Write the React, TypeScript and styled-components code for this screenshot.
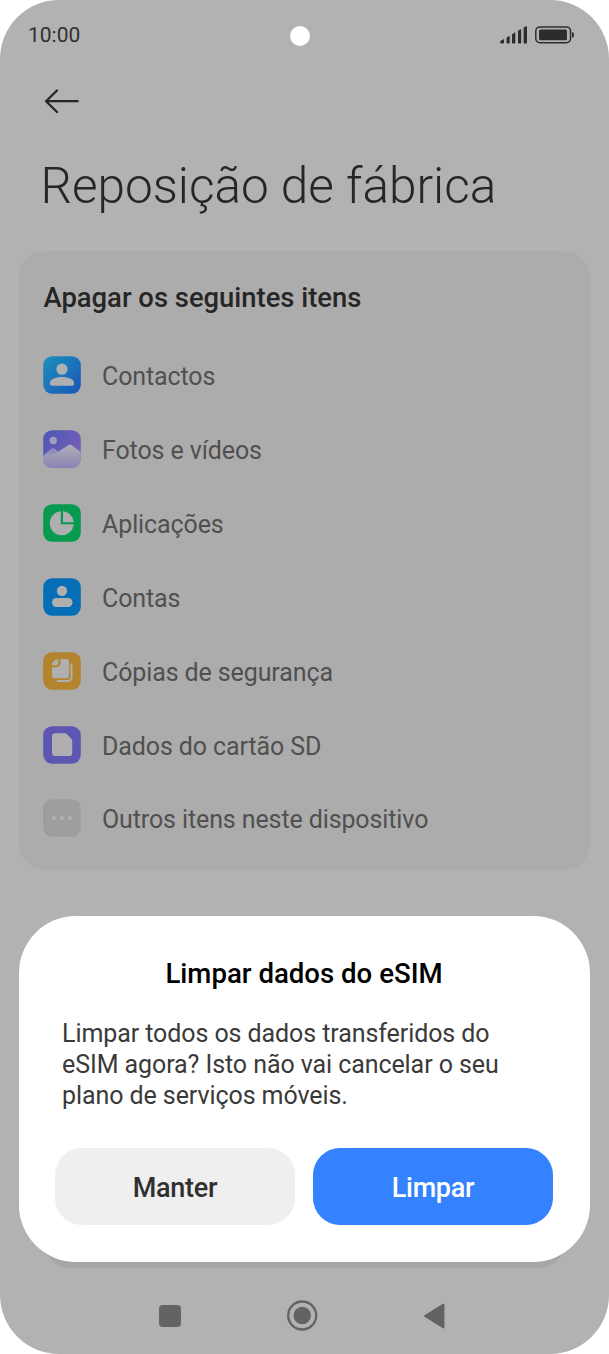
import React from 'react';
import styled, { createGlobalStyle } from 'styled-components';

const GlobalStyle = createGlobalStyle`
  * { box-sizing: border-box; }
  body { margin: 0; background: #fff; font-family: Roboto, "Liberation Sans", sans-serif; }
  h1, h2, p, ul { margin: 0; padding: 0; }
  ul { list-style: none; }
  svg { display: block; flex: none; }
`;

const Phone = styled.main`
  position: relative;
  width: 609px;
  height: 1354px;
  display: flex;
  flex-direction: column;
  overflow: hidden;
  background: #b2b2b2;
  border-radius: 59px;
`;

const StatusBar = styled.header`
  display: grid;
  grid-template-columns: 1fr 20px 1fr;
  align-items: center;
  height: 72px;
  padding: 0 34px 0 28px;
`;

const Clock = styled.time`
  font-size: 21px;
  line-height: 24px;
  font-weight: 450;
  color: #303030;
  padding-bottom: 2px;
`;

const Camera = styled.span`
  width: 20px;
  height: 20px;
  border-radius: 50%;
  background: #fff;
  margin-left: -2px;
`;

const StatusIcons = styled.div`
  display: flex;
  justify-content: flex-end;
  gap: 8px;
  padding-bottom: 3px;
`;

const BackButton = styled.button`
  border: 0;
  background: none;
  padding: 0;
  margin: 16px 0 0 44px;
  width: 36px;
  height: 26px;
`;

const Title = styled.h1`
  margin: 42px 0 0 40.5px;
  font-size: 49.5px;
  line-height: 60px;
  font-weight: 300;
  color: #262626;
  white-space: nowrap;
`;

const Card = styled.section`
  margin: 35px 19px 0;
  height: 619px;
  border-radius: 26px;
  background: #acacac;
  padding: 31px 24px 0;
`;

const CardTitle = styled.h2`
  font-size: 27.4px;
  line-height: 32px;
  font-weight: 500;
  color: #262626;
  white-space: nowrap;
  padding-left: 0.5px;
`;

const ItemList = styled.ul`
  margin-top: 24.5px;
`;

const Item = styled.li`
  display: flex;
  align-items: center;
  height: 73.85px;
  gap: 21px;
`;

const ItemLabel = styled.span`
  font-size: 25px;
  line-height: 30px;
  color: #505050;
  white-space: nowrap;
  padding-top: 4px;
  letter-spacing: -0.11px;
`;

const SheetEdge = styled.div`
  position: absolute;
  left: 44px;
  top: 1200px;
  width: 521px;
  height: 68px;
  border-radius: 26px;
  background: #a6a6a6;
`;

const Dialog = styled.div`
  position: absolute;
  left: 19px;
  top: 916px;
  width: 571px;
  height: 346px;
  border-radius: 57px;
  background: #fff;
  padding: 42px 37px 0 36px;
`;

const DialogTitle = styled.h2`
  font-size: 27.6px;
  line-height: 32px;
  font-weight: 500;
  color: #000;
  text-align: center;
`;

const DialogText = styled.p`
  margin: 28px 0 0 7px;
  font-size: 25px;
  line-height: 31px;
  color: #3a3a3a;
  white-space: nowrap;
  letter-spacing: -0.08px;
`;

const Actions = styled.div`
  display: grid;
  grid-template-columns: 1fr 1fr;
  gap: 18px;
  margin-top: 37px;
`;

const Action = styled.button<{ $primary?: boolean }>`
  height: 77px;
  border: 0;
  border-radius: 27px;
  padding: 2px 0 0;
  font: 500 27px/32px Roboto, "Liberation Sans", sans-serif;
  letter-spacing: -0.3px;
  background: ${(p) => (p.$primary ? '#3482ff' : '#efefef')};
  color: ${(p) => (p.$primary ? '#fff' : '#303030')};
`;

const NavBar = styled.nav`
  display: flex;
  align-items: center;
  gap: 106px;
  margin-top: auto;
  height: 77px;
  padding-left: 159px;
`;

const Tile = ({ fill, children }: { fill: string; children: React.ReactNode }) => (
  <svg width="38" height="38" viewBox="0 0 38 38">
    <rect x=".2" y=".2" width="37.6" height="37.6" rx="9" fill={fill} />
    {children}
  </svg>
);

const ContactIcon = () => (
  <Tile fill="url(#contact)">
    <defs>
      <linearGradient id="contact" x1="0" y1="0" x2="1" y2="1">
        <stop offset="0" stopColor="#1d91bd" />
        <stop offset="1" stopColor="#1956b8" />
      </linearGradient>
    </defs>
    <circle cx="19" cy="13.2" r="5.6" fill="#b0b0b0" />
    <path d="M7 28v-1c0-3.500 5-6 12-6s12 2.500 12 6v1q0 1.700-1.700 1.700H8.700Q7 29.700 7 28z" fill="#afafb1" />
  </Tile>
);

const PhotoIcon = () => (
  <Tile fill="url(#photo)">
    <defs>
      <linearGradient id="photo" x1="0" y1="0" x2="1" y2=".7">
        <stop offset="0" stopColor="#4a55b8" />
        <stop offset="1" stopColor="#7a61b4" />
      </linearGradient>
      <linearGradient id="hill" x1="0" y1="0" x2="0" y2="1">
        <stop offset="0" stopColor="#b0afb4" />
        <stop offset="1" stopColor="#8983b5" />
      </linearGradient>
    </defs>
    <circle cx="10.200" cy="10.500" r="3.700" fill="#9ca0bd" />
    <path d="M.2 25.500 8 19q2-1.700 4 0l8 6.500v8H.2z" fill="#918dba" />
    <path d="M.2 26.500 4 24.300q1.700-1 3.500 0 2.500 1 5-.8L25.500 15q1.500-1 3 0l9.300 7v6.800a9 9 0 0 1-9 9H9.200a9 9 0 0 1-9-9z" fill="url(#hill)" />
  </Tile>
);

const AppsIcon = () => (
  <Tile fill="#079b50">
    <path d="M17.800 7.300A12 12 0 1 0 30.700 20.300H17.800z" fill="#afafaf" />
    <path d="M20 7.200V18.200H30.800A12 12 0 0 0 20 7.200z" fill="#afafaf" />
  </Tile>
);

const AccountIcon = () => (
  <Tile fill="#066eb7">
    <circle cx="19" cy="12.900" r="5.200" fill="#afafaf" />
    <rect x="9" y="20" width="20.500" height="9" rx="4.500" fill="#afafaf" />
  </Tile>
);

const BackupIcon = () => (
  <Tile fill="#b1842d">
    <path d="M14.500 29h10.300q3.700 0 3.700-3.700V12.500" fill="none" stroke="#afafaf" strokeWidth="2" strokeLinecap="round" />
    <path d="M17.500 7H23.500q2.500 0 2.500 2.500V23.800q0 2.500-2.500 2.500H11.500Q9 26.300 9 23.800V15.200h3.500q5 0 5-5z" fill="#afafaf" />
    <path d="M9 13.200q0-5.700 6.500-6v2.500q0 3.500-3.500 3.500z" fill="#afafaf" />
  </Tile>
);

const CardIcon = () => (
  <Tile fill="#5e57b2">
    <path d="M12 7.300H21.500q1.500 0 2.500 1l4.200 4.400q1 1 1 2.400V27q0 3-3 3H12q-3 0-3-3V10.300q0-3 3-3z" fill="#afafaf" />
  </Tile>
);

const MoreIcon = () => (
  <Tile fill="#9d9d9d">
    <circle cx="11" cy="19" r="2.200" fill="#afafaf" />
    <circle cx="19" cy="19" r="2.200" fill="#afafaf" />
    <circle cx="27" cy="19" r="2.200" fill="#afafaf" />
  </Tile>
);

const items = [
  { label: 'Contactos', icon: <ContactIcon /> },
  { label: 'Fotos e vídeos', icon: <PhotoIcon /> },
  { label: 'Aplicações', icon: <AppsIcon /> },
  { label: 'Contas', icon: <AccountIcon /> },
  { label: 'Cópias de segurança', icon: <BackupIcon /> },
  { label: 'Dados do cartão SD', icon: <CardIcon /> },
  { label: 'Outros itens neste dispositivo', icon: <MoreIcon /> },
];

export default function App() {
  return (
    <>
      <GlobalStyle />
      <Phone>
        <StatusBar>
          <Clock>10:00</Clock>
          <Camera />
          <StatusIcons>
            <svg width="27" height="18" viewBox="0 0 27 18" fill="#2c2c2c">
              <path d="M.3 15 4 13v3.700q0 .8-.8.800H1.200q-1 0-1-1zM6.600 11.500 9.700 9.700v7q0 .8-.8.800H7.400q-.8 0-.8-.8zM12 8.300 15.300 6.300v10.400q0 .8-.8.800h-1.700q-.8 0-.8-.8zM18 4.800 21.200 3v13.700q0 .8-.8.800h-1.600q-.8 0-.8-.8zM23.600 1.500 26 .3q1-.2 1 .7v15.700q0 .8-.8.800h-1.800q-.8 0-.8-.8z" />
            </svg>
            <svg width="40" height="18" viewBox="0 0 40 18">
              <rect x=".8" y=".9" width="34.700" height="15.900" rx="4.200" fill="none" stroke="#2c2c2c" strokeWidth="1.500" />
              <rect x="4" y="3.500" width="28" height="10.700" rx="1.500" fill="#2c2c2c" />
              <path d="M37 6q2 .3 2 2.900t-2 2.900z" fill="#2c2c2c" />
            </svg>
          </StatusIcons>
        </StatusBar>
        <BackButton aria-label="Voltar">
          <svg width="36" height="26" viewBox="0 0 36 26" fill="none" stroke="#262626" strokeWidth="2.300" strokeLinecap="round" strokeLinejoin="round">
            <path d="M33.700 13.200H2M13 2.500 2 13.200 13 24" />
          </svg>
        </BackButton>
        <Title>Reposição de fábrica</Title>
        <Card>
          <CardTitle>Apagar os seguintes itens</CardTitle>
          <ItemList>
            {items.map((item) => (
              <Item key={item.label}>
                {item.icon}
                <ItemLabel>{item.label}</ItemLabel>
              </Item>
            ))}
          </ItemList>
        </Card>
        <NavBar>
          <svg width="22" height="24" viewBox="0 0 22 24">
            <rect y="1" width="22" height="22" rx="4" fill="#636363" />
          </svg>
          <svg width="31" height="31" viewBox="0 0 31 31">
            <circle cx="15.200" cy="15.500" r="14" fill="none" stroke="#636363" strokeWidth="2.300" />
            <circle cx="15.200" cy="15.500" r="8.700" fill="#636363" />
          </svg>
          <svg width="22" height="26" viewBox="0 0 22 26">
            <path d="M19.500 1.500v23L1 13z" fill="#636363" stroke="#636363" strokeWidth="1.800" strokeLinejoin="round" />
          </svg>
        </NavBar>
        <SheetEdge />
        <Dialog role="dialog">
          <DialogTitle>Limpar dados do eSIM</DialogTitle>
          <DialogText>
            Limpar todos os dados transferidos do
            <br />
            eSIM agora? Isto não vai cancelar o seu
            <br />
            plano de serviços móveis.
          </DialogText>
          <Actions>
            <Action>Manter</Action>
            <Action $primary>Limpar</Action>
          </Actions>
        </Dialog>
      </Phone>
    </>
  );
}
